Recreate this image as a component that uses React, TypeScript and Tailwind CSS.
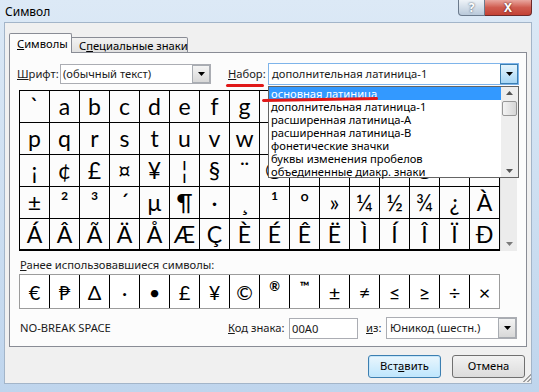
import React from 'react';

const grid = [
  ['`', 'a', 'b', 'c', 'd', 'e', 'f', 'g', 'h', 'i', 'j', 'k', 'l', 'm', 'n', 'o'],
  ['p', 'q', 'r', 's', 't', 'u', 'v', 'w', 'x', 'y', 'z', '{', '|', '}', '~', '\u00a0'],
  ['¡', '¢', '£', '¤', '¥', '¦', '§', '¨', '©', 'ª', '«', '¬', '\u00ad', '®', '¯', '°'],
  ['±', '²', '³', '´', 'µ', '¶', '·', '¸', '¹', 'º', '»', '¼', '½', '¾', '¿', 'À'],
  ['Á', 'Â', 'Ã', 'Ä', 'Å', 'Æ', 'Ç', 'È', 'É', 'Ê', 'Ë', 'Ì', 'Í', 'Î', 'Ï', 'Ð'],
];

const recent = ['€', '₱', 'Δ', '·', '•', '£', '¥', '©', '®', '™', '±', '≠', '≤', '≥', '÷', '×'];

const sets = [
  'основная латиница',
  'дополнительная латиница-1',
  'расширенная латиница-A',
  'расширенная латиница-B',
  'фонетические значки',
  'буквы изменения пробелов',
  'объединенные диакр. знаки',
];

const Down = ({ className = '' }: { className?: string }) => (
  <svg width="7" height="4" viewBox="0 0 7 4" className={className}>
    <path d="M0 0h7L3.5 4z" fill="currentColor" />
  </svg>
);

const Up = ({ className = '' }: { className?: string }) => (
  <svg width="7" height="4" viewBox="0 0 7 4" className={className}>
    <path d="M0 4h7L3.5 0z" fill="currentColor" />
  </svg>
);

const DropButton = ({ hot = false }: { hot?: boolean }) => (
  <div
    className={
      hot
        ? 'w-[18px] h-full flex items-center justify-center border border-[#3c7fb1] bg-gradient-to-b from-[#e5f4fc] to-[#a7d6f5] text-black'
        : 'w-[18px] h-full flex items-center justify-center border border-[#a8acb2] bg-gradient-to-b from-[#f4f4f4] to-[#d8d8d8] text-black'
    }
  >
    <Down />
  </div>
);

export default function App() {
  return (
    <div
      className="relative w-[539px] h-[392px] overflow-hidden flex flex-col bg-gradient-to-b from-[#dce9f6] to-[#bfd5ed] text-[11.2px] text-[#1a1a1a]"
      style={{ fontFamily: '"Noto Sans", "Open Sans", sans-serif' }}
    >
      {/* title bar */}
      <div className="h-[22px] flex items-start justify-between">
        <div className="pl-[5px] pt-[3px] text-[12px] text-black">Символ</div>
        <div className="flex mr-[7px]">
          <div className="w-[27px] h-[16px] rounded-bl-[4px] border border-t-0 border-[#6b7a8c] bg-gradient-to-b from-[#eef3f8] to-[#b9c9da] flex items-center justify-center text-[12px] font-bold leading-[14px] text-white [text-shadow:0_0_2px_#2a3a4c]">
            ?
          </div>
          <div className="w-[47px] h-[16px] rounded-br-[4px] border border-t-0 border-l-0 border-[#6d2a2a] bg-gradient-to-b from-[#e8a69f] via-[#cf5b4f] to-[#c44235] flex items-center justify-center text-[12px] font-bold leading-[14px] text-white [text-shadow:0_0_2px_#3a1010]">
            X
          </div>
        </div>
      </div>

      {/* client area */}
      <div className="ml-[4px] w-[528px] h-[362px] bg-[#f0f0f0] border border-[#a3b5c9] px-[4px] pt-[10px]">
        {/* tabs */}
        <div className="flex items-end h-[20px] relative z-10">
          <div className="h-[20px] w-[63px] border border-b-0 border-[#898c95] rounded-t-[2px] bg-[#fcfcfc] pl-[7px] pt-[2px] text-black whitespace-nowrap">
            <span className="underline">С</span>имволы
          </div>
          <div className="h-[16px] w-[116px] border border-l-0 border-[#898c95] rounded-tr-[2px] bg-gradient-to-b from-[#f2f2f2] to-[#e1e1e1] pl-[7px] leading-[15px] text-black whitespace-nowrap">
            С<span className="underline">п</span>ециальные знаки
          </div>
        </div>

        {/* panel */}
        <div className="-mt-px w-[518px] h-[295px] border border-[#898c95] bg-[#fcfcfc] pl-[7px] pt-[10px]">
          {/* font / subset row */}
          <div className="flex items-center h-[22px]">
            <div className="w-[43px]">
              <span className="underline">Ш</span>рифт:
            </div>
            <div className="w-[151px] h-[20px] flex border border-[#abadb3] bg-white">
              <div className="flex-1 pl-[2px] leading-[18px]">(обычный текст)</div>
              <DropButton />
            </div>
            <div className="ml-[17px] w-[40px]">
              <span className="underline">Н</span>абор:
            </div>
            <div className="w-[251px] h-[22px] flex border border-[#7eb4ea] bg-white">
              <div className="flex-1 pl-[3px] leading-[20px]">дополнительная латиница-1</div>
              <DropButton hot />
            </div>
          </div>

          {/* symbol grid */}
          <div className="mt-[5px] ml-[2px] flex">
            <div className="border-l border-t border-black">
              {grid.map((row, r) => (
                <div key={r} className="flex">
                  {row.map((ch, c) => (
                    <div
                      key={c}
                      className={
                        r === grid.length - 1
                          ? 'w-[30px] h-[32px] border-r border-b-2 border-black flex items-center justify-center text-[23px] leading-none text-black'
                          : 'w-[30px] h-[32px] border-r border-b border-black flex items-center justify-center text-[23px] leading-none text-black'
                      }
                      style={{ fontFamily: 'Lato, "DejaVu Sans", sans-serif' }}
                    >
                      {ch}
                    </div>
                  ))}
                </div>
              ))}
            </div>
            <div className="w-[17px] bg-[#ececec] border-l border-[#e0e0e0] flex flex-col justify-between items-center py-[5px] text-[#7a7a7a]">
              <Up />
              <Down />
            </div>
          </div>

          {/* recently used */}
          <div className="mt-[6px] ml-[3px] h-[16px] leading-[16px]">
            <span className="underline">Р</span>анее использовавшиеся символы:
          </div>
          <div className="mt-[1px] ml-[2px] w-[481px] h-[35px] flex border border-[#9c9c9c] bg-white">
            {recent.map((ch, i) => (
              <div
                key={i}
                className={
                  i === recent.length - 1
                    ? 'w-[29px] h-full flex items-center justify-center text-[20px] leading-none text-black'
                    : 'w-[30px] h-full border-r border-black flex items-center justify-center text-[20px] leading-none text-black'
                }
                style={{ fontFamily: 'Lato, "DejaVu Sans", sans-serif' }}
              >
                {ch === '®' || ch === '™' ? (
                  <span className="text-[13px] font-bold -translate-y-[5px]">{ch}</span>
                ) : (
                  ch
                )}
              </div>
            ))}
          </div>

          {/* code row */}
          <div className="mt-[8px] flex items-center h-[22px]">
            <div className="w-[211px] pl-[3px]">NO-BREAK SPACE</div>
            <div className="w-[61px]">
              <span className="underline">К</span>од знака:
            </div>
            <div className="w-[69px] h-[21px] border border-[#abadb3] bg-white pl-[2px] leading-[19px]">00A0</div>
            <div className="ml-[8px] w-[20px]">
              <span className="underline">и</span>з:
            </div>
            <div className="w-[131px] h-[22px] flex border border-[#abadb3] bg-white">
              <div className="flex-1 pl-[3px] leading-[20px]">Юникод (шестн.)</div>
              <DropButton />
            </div>
          </div>
        </div>

        {/* buttons */}
        <div className="mt-[8px] flex justify-end gap-[11px] pr-[2px]">
          <div className="w-[73px] h-[23px] rounded-[3px] border border-[#3c7fb1] bg-gradient-to-b from-[#eaf6fd] to-[#bee6fd] shadow-[inset_0_0_0_1px_#c6e6fa] flex items-center justify-center text-black">
            Вст<span className="underline">а</span>вить
          </div>
          <div className="w-[73px] h-[23px] rounded-[3px] border border-[#707070] bg-gradient-to-b from-[#f2f2f2] to-[#dcdcdc] flex items-center justify-center text-black">
            Отмена
          </div>
        </div>
      </div>

      {/* resize grip */}
      <div className="absolute left-[523px] top-[374px] w-[8px] h-[8px] bg-[linear-gradient(135deg,transparent_50%,#a0a0a0_50%,#a0a0a0_60%,transparent_60%,transparent_75%,#a0a0a0_75%,#a0a0a0_85%,transparent_85%)]" />

      {/* opened subset list */}
      <div className="absolute left-[268px] top-[86px] w-[251px] h-[92px] border border-[#646464] bg-white flex z-20">
        <div className="flex-1">
          {sets.map((s, i) => (
            <div
              key={i}
              className={
                i === 0
                  ? 'h-[13px] leading-[13px] pl-[2px] bg-[#3399ff] text-white whitespace-nowrap'
                  : 'h-[13px] leading-[13px] pl-[2px] text-black whitespace-nowrap'
              }
            >
              {s}
            </div>
          ))}
        </div>
        <div className="w-[17px] bg-[#eeeeee] flex flex-col items-center justify-between py-[4px] text-[#555]">
          <div className="flex flex-col items-center gap-[6px]">
            <Up />
            <div className="w-[15px] h-[15px] rounded-[2px] border border-[#979797] bg-gradient-to-r from-[#f3f3f3] to-[#d6d6d6]" />
          </div>
          <Down />
        </div>
      </div>

      {/* red marker strokes */}
      <div className="absolute left-[226px] top-[84px] w-[38px] h-[3px] rounded-full bg-[#e01818] z-30" />
      <div className="absolute left-[262px] top-[98px] w-[116px] h-[3px] rounded-full bg-[#e01818] -rotate-[1deg] z-30" />
    </div>
  );
}
